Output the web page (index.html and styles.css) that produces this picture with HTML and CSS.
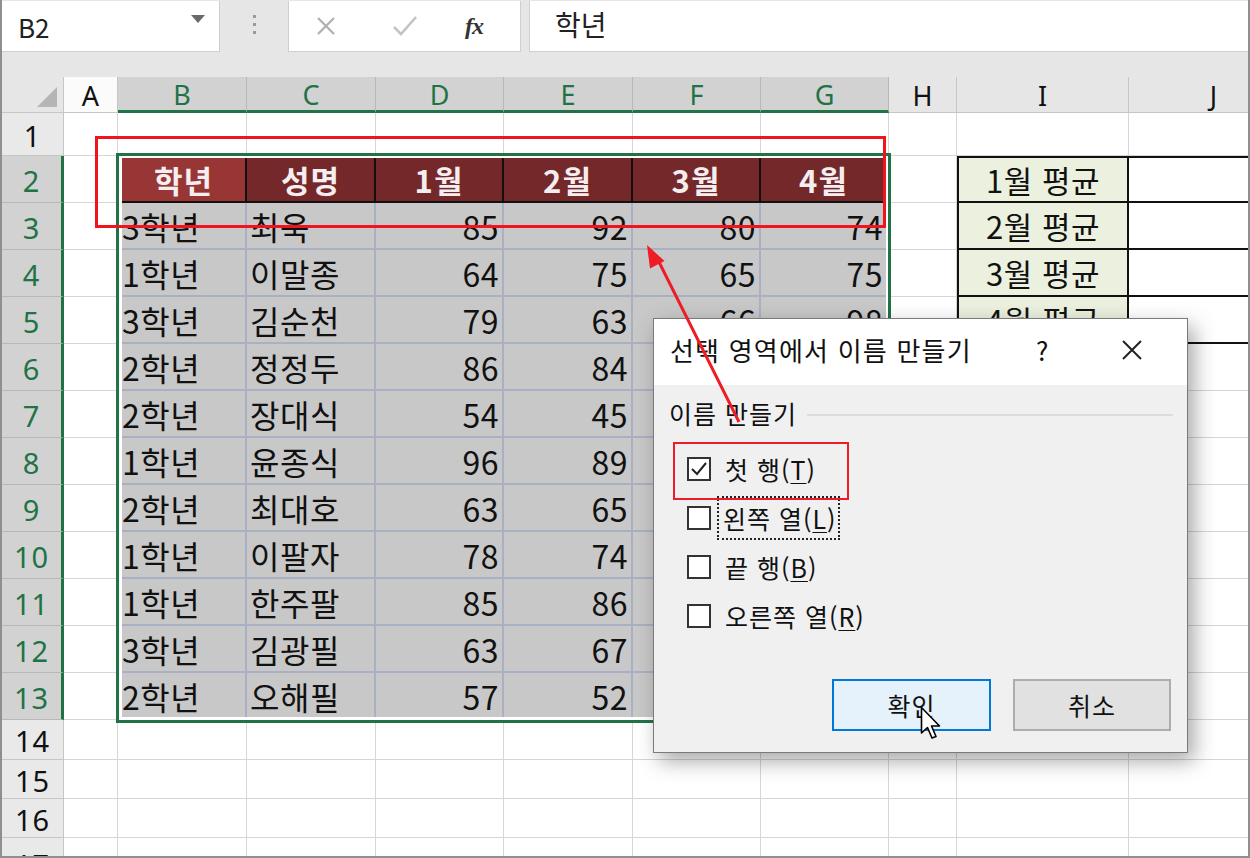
FILE: index.html
```html
<!DOCTYPE html>
<html lang="ko">
<head>
<meta charset="utf-8">
<title>선택 영역에서 이름 만들기</title>
<link rel="stylesheet" href="styles.css">
</head>
<body>
<div class="window">
  <div class="fbar">
    <div class="namebox"><span class="ref">B2</span><span class="dd"></span></div>
    <div class="dots"><i></i><i></i><i></i></div>
    <div class="fxbox">
      <svg class="ico-x" width="22" height="22" viewBox="0 0 22 22"><path d="M3 3L19 19M19 3L3 19" stroke="#b0b0b0" stroke-width="2.2" fill="none"/></svg>
      <svg class="ico-ok" width="28" height="24" viewBox="0 0 28 24"><path d="M3 13L10 20L25 3" stroke="#c4c4c4" stroke-width="2.6" fill="none"/></svg>
      <span class="fx">fx</span>
    </div>
    <div class="finput">학년</div>
  </div>
  <div class="band"></div>
  <div class="sheet">
    <div class="corner"><span class="tri"></span></div>
    <div class="ch a">A</div>
    <div class="ch sel">B</div><div class="ch sel">C</div><div class="ch sel">D</div><div class="ch sel">E</div><div class="ch sel">F</div><div class="ch sel">G</div>
    <div class="ch">H</div><div class="ch">I</div><div class="ch">J</div>

    <div class="rh">1</div><div class="c"></div><div class="c"></div><div class="c"></div><div class="c"></div><div class="c"></div><div class="c"></div><div class="c"></div><div class="c"></div><div class="c"></div><div class="c"></div>

    <div class="rh sel">2</div><div class="c"></div>
    <div class="th act">학년</div><div class="th">성명</div><div class="th">1월</div><div class="th">2월</div><div class="th">3월</div><div class="th last">4월</div>
    <div class="c"></div><div class="avg top">1월 평균</div><div class="avgv top"></div>

    <div class="rh sel">3</div><div class="c"></div>
    <div class="td first">3학년</div><div class="td">최욱</div><div class="td n">85</div><div class="td n">92</div><div class="td n">80</div><div class="td n last">74</div>
    <div class="c"></div><div class="avg">2월 평균</div><div class="avgv"></div>

    <div class="rh sel">4</div><div class="c"></div>
    <div class="td first">1학년</div><div class="td">이말종</div><div class="td n">64</div><div class="td n">75</div><div class="td n">65</div><div class="td n last">75</div>
    <div class="c"></div><div class="avg">3월 평균</div><div class="avgv"></div>

    <div class="rh sel">5</div><div class="c"></div>
    <div class="td first">3학년</div><div class="td">김순천</div><div class="td n">79</div><div class="td n">63</div><div class="td n">66</div><div class="td n last">98</div>
    <div class="c"></div><div class="avg">4월 평균</div><div class="avgv"></div>

    <div class="rh sel">6</div><div class="c"></div>
    <div class="td first">2학년</div><div class="td">정정두</div><div class="td n">86</div><div class="td n">84</div><div class="td n">71</div><div class="td n last">80</div>
    <div class="c"></div><div class="c"></div><div class="c"></div>

    <div class="rh sel">7</div><div class="c"></div>
    <div class="td first">2학년</div><div class="td">장대식</div><div class="td n">54</div><div class="td n">45</div><div class="td n">62</div><div class="td n last">58</div>
    <div class="c"></div><div class="c"></div><div class="c"></div>

    <div class="rh sel">8</div><div class="c"></div>
    <div class="td first">1학년</div><div class="td">윤종식</div><div class="td n">96</div><div class="td n">89</div><div class="td n">91</div><div class="td n last">94</div>
    <div class="c"></div><div class="c"></div><div class="c"></div>

    <div class="rh sel">9</div><div class="c"></div>
    <div class="td first">2학년</div><div class="td">최대호</div><div class="td n">63</div><div class="td n">65</div><div class="td n">70</div><div class="td n last">68</div>
    <div class="c"></div><div class="c"></div><div class="c"></div>

    <div class="rh sel">10</div><div class="c"></div>
    <div class="td first">1학년</div><div class="td">이팔자</div><div class="td n">78</div><div class="td n">74</div><div class="td n">77</div><div class="td n last">81</div>
    <div class="c"></div><div class="c"></div><div class="c"></div>

    <div class="rh sel">11</div><div class="c"></div>
    <div class="td first">1학년</div><div class="td">한주팔</div><div class="td n">85</div><div class="td n">86</div><div class="td n">83</div><div class="td n last">88</div>
    <div class="c"></div><div class="c"></div><div class="c"></div>

    <div class="rh sel">12</div><div class="c"></div>
    <div class="td first">3학년</div><div class="td">김광필</div><div class="td n">63</div><div class="td n">67</div><div class="td n">60</div><div class="td n last">64</div>
    <div class="c"></div><div class="c"></div><div class="c"></div>

    <div class="rh sel">13</div><div class="c"></div>
    <div class="td first bot">2학년</div><div class="td bot">오해필</div><div class="td n bot">57</div><div class="td n bot">52</div><div class="td n bot">59</div><div class="td n last bot">55</div>
    <div class="c"></div><div class="c"></div><div class="c"></div>

    <div class="rh">14</div><div class="c"></div><div class="c"></div><div class="c"></div><div class="c"></div><div class="c"></div><div class="c"></div><div class="c"></div><div class="c"></div><div class="c"></div><div class="c"></div>
    <div class="rh">15</div><div class="c"></div><div class="c"></div><div class="c"></div><div class="c"></div><div class="c"></div><div class="c"></div><div class="c"></div><div class="c"></div><div class="c"></div><div class="c"></div>
    <div class="rh">16</div><div class="c"></div><div class="c"></div><div class="c"></div><div class="c"></div><div class="c"></div><div class="c"></div><div class="c"></div><div class="c"></div><div class="c"></div><div class="c"></div>
    <div class="rh last">17</div><div class="c"></div><div class="c"></div><div class="c"></div><div class="c"></div><div class="c"></div><div class="c"></div><div class="c"></div><div class="c"></div><div class="c"></div><div class="c"></div>
  </div>

  <div class="selbox"></div>
  <div class="redbox"></div>

  <div class="dialog">
    <div class="dtitle">
      <span class="dtext">선택 영역에서 이름 만들기</span>
      <span class="help">?</span>
      <svg class="close" width="22" height="22" viewBox="0 0 22 22"><path d="M2 2L20 20M20 2L2 20" stroke="#222" stroke-width="2" fill="none"/></svg>
    </div>
    <div class="dbody">
      <div class="group"><span class="glabel">이름 만들기</span><span class="gline"></span></div>
      <div class="opts">
        <div class="opt hl">
          <span class="cb"><svg width="20" height="20" viewBox="0 0 20 20"><path d="M3 10L8 15L17 4" stroke="#222" stroke-width="2" fill="none"/></svg></span>
          <span class="lbl">첫 행(<u>T</u>)</span>
        </div>
        <div class="opt"><span class="cb"></span><span class="lbl focus">왼쪽 열(<u>L</u>)</span></div>
        <div class="opt"><span class="cb"></span><span class="lbl">끝 행(<u>B</u>)</span></div>
        <div class="opt"><span class="cb"></span><span class="lbl">오른쪽 열(<u>R</u>)</span></div>
      </div>
      <div class="btns">
        <div class="btn primary">확인</div>
        <div class="btn">취소</div>
      </div>
    </div>
  </div>

  <svg class="arrow" width="1250" height="858" viewBox="0 0 1250 858">
    <line x1="737" y1="422" x2="657" y2="262" stroke="#ee1c24" stroke-width="3"/>
    <polygon points="645,245 662.5,261 648,268.5" fill="#ee1c24"/>
  </svg>

  <svg class="cursor" width="24" height="36" viewBox="0 0 24 36">
    <path d="M1.5 1.5L1.5 27L7.5 21.5L12 32L16 30.5L11.5 20L19.5 20Z" fill="#fff" stroke="#000" stroke-width="1.6" stroke-linejoin="round"/>
  </svg>
</div>
</body>
</html>
```
FILE: styles.css
```css
* { box-sizing: border-box; }
html, body { margin: 0; padding: 0; }
body {
  width: 1250px;
  height: 858px;
  overflow: hidden;
  background: #fff;
  font-family: "Noto Sans CJK KR", "Noto Sans", sans-serif;
  color: #111;
}
.window {
  position: relative;
  width: 1250px;
  height: 858px;
  overflow: hidden;
  border: 2px solid #8f8f8f;
  border-top: none;
  background: #e6e6e6;
}

/* formula bar */
.fbar {
  display: flex;
  height: 53px;
  background: #e6e6e6;
}
.namebox {
  width: 218px;
  height: 51px;
  margin-top: 1px;
  background: #fff;
  border-right: 1px solid #cfcfcf;
  border-bottom: 1px solid #cfcfcf;
  display: flex;
  align-items: center;
  justify-content: space-between;
  padding: 0 14px 0 16px;
}
.ref { font-size: 26px; color: #222; }
.dd {
  width: 0; height: 0;
  border-left: 7px solid transparent;
  border-right: 7px solid transparent;
  border-top: 8px solid #6a6a6a;
  margin-top: -14px;
}
.dots {
  width: 68px;
  display: flex;
  flex-direction: column;
  align-items: center;
  justify-content: center;
  gap: 5px;
  padding-bottom: 4px;
}
.dots i { display: block; width: 3px; height: 3px; background: #9a9a9a; }
.fxbox {
  width: 233px;
  height: 51px;
  margin-top: 1px;
  background: #fff;
  border: 1px solid #cfcfcf;
  border-top: none;
  display: flex;
  align-items: center;
  padding-left: 26px;
}
.ico-x { margin-right: 54px; }
.ico-ok { margin-right: 46px; }
.fx {
  font-family: "Liberation Serif", serif;
  font-style: italic;
  font-size: 24px;
  color: #333;
  font-weight: bold;
  letter-spacing: -1px;
}
.finput {
  flex: 1;
  height: 51px;
  margin-top: 1px;
  margin-left: 8px;
  background: #fff;
  border-left: 1px solid #cfcfcf;
  border-bottom: 1px solid #cfcfcf;
  font-size: 28px;
  padding-left: 25px;
  line-height: 46px;
  color: #222;
}
.band { height: 24px; background: #e6e6e6; }

/* sheet */
.sheet {
  display: grid;
  grid-template-columns: 62px 54px 129px 129px 128px 129px 128px 128px 68px 172px 170px;
  grid-template-rows: 36px 43px repeat(12, 47px) 40px 39px 39px 39px;
  background: #fff;
}
.sheet > div {
  display: flex;
  align-items: center;
  overflow: hidden;
  white-space: nowrap;
}
.corner {
  background: #e6e6e6;
  border-right: 1px solid #c6c6c6;
  border-bottom: 1px solid #c6c6c6;
  position: relative;
}
.tri {
  position: absolute;
  right: 6px; bottom: 5px;
  width: 0; height: 0;
  border-left: 20px solid transparent;
  border-bottom: 20px solid #b5b5b5;
}
.ch {
  justify-content: center;
  background: #e6e6e6;
  border-right: 1px solid #c6c6c6;
  border-bottom: 1px solid #c6c6c6;
  font-family: "Noto Sans", sans-serif;
  font-size: 27px;
  line-height: 30px;
  color: #111;
  padding-top: 2px;
}
.ch.a { background: #fbfbfb; }
.ch.sel {
  background: #d2d2d2;
  color: #217346;
  border-bottom: 3px solid #217346;
  border-right: 1px solid #b8b8b8;
}
.rh {
  justify-content: center;
  background: #e9e9e9;
  border-right: 1px solid #c6c6c6;
  border-bottom: 1px solid #c6c6c6;
  font-family: "Noto Sans", sans-serif;
  font-size: 29px;
  line-height: 34px;
  color: #111;
  padding-top: 3px;
  letter-spacing: 1px;
}
.sheet > .rh.last { align-items: flex-start; padding-top: 10px; }
.rh.sel {
  background: #d2d2d2;
  color: #217346;
  border-right: 3px solid #217346;
  border-bottom: 1px solid #b8b8b8;
}
.c {
  border-right: 1px solid #d6d6d6;
  border-bottom: 1px solid #d6d6d6;
}
.th {
  justify-content: center;
  background: #74282a;
  color: #f4eef0;
  font-weight: bold;
  font-size: 31px;
  letter-spacing: 1px;
  border-right: 2px solid #111;
  border-bottom: 2px solid #111;
  margin-top: 2px;
}
.th.act { background: #983636; margin-left: 4px; }
.th.last { margin-right: 3px; border-right: none; }
.td {
  background: #c8c8c8;
  border-right: 2px solid #a9b0c4;
  border-bottom: 2px solid #a9b0c4;
  font-size: 32px;
  letter-spacing: 0.5px;
  color: #111;
  padding-left: 3px;
  padding-top: 1px;
}
.td.first { margin-left: 4px; padding-left: 0; }
.td.n { justify-content: flex-end; padding-right: 3px; padding-left: 0; }
.td.last { margin-right: 3px; border-right: none; }
.td.bot { margin-bottom: 3px; border-bottom: none; }
.avg {
  justify-content: center;
  background: #ebf1de;
  border: 2px solid #111;
  border-top: none;
  font-size: 31px;
  letter-spacing: 0.5px;
  color: #111;
}
.avgv {
  background: #fff;
  border-right: 2px solid #111;
  border-bottom: 2px solid #111;
}
.sheet > .top { border-top: 2px solid #111; }

/* overlays */
.selbox {
  position: absolute;
  left: 114px;
  top: 153px;
  width: 775px;
  height: 570px;
  border: 3px solid #217346;
  pointer-events: none;
}
.redbox {
  position: absolute;
  left: 93px;
  top: 136px;
  width: 791px;
  height: 92px;
  border: 3px solid #f0141e;
  pointer-events: none;
}

/* dialog */
.dialog {
  position: absolute;
  left: 651px;
  top: 318px;
  width: 535px;
  height: 435px;
  background: #f0f0f0;
  border: 1px solid #7a7a7a;
  box-shadow: 6px 8px 20px rgba(0,0,0,0.35);
  display: flex;
  flex-direction: column;
}
.dtitle {
  height: 66px;
  background: #fff;
  display: flex;
  align-items: center;
  padding-left: 16px;
  padding-bottom: 6px;
  flex-shrink: 0;
}
.dtext { font-size: 26px; letter-spacing: 1.2px; color: #111; width: 366px; }
.help { font-size: 26px; color: #111; width: 85px; }
.close { margin-top: 2px; }
.dbody {
  flex: 1;
  display: flex;
  flex-direction: column;
  padding: 12px 14px 0 15px;
}
.group {
  display: flex;
  align-items: center;
  height: 32px;
}
.glabel { font-size: 25px; letter-spacing: 1px; color: #111; }
.gline { flex: 1; height: 2px; background: #dcdcdc; margin-left: 10px; margin-top: 4px; }
.opts {
  display: flex;
  flex-direction: column;
  margin-top: 16px;
  padding-left: 18px;
}
.opt {
  display: flex;
  align-items: center;
  height: 50px;
  margin-top: -1px;
}
.opt.hl { position: relative; }
.opt.hl::after {
  content: "";
  position: absolute;
  left: -14px;
  top: -2px;
  width: 172px;
  height: 54px;
  border: 2px solid #ec1c2a;
}
.cb {
  width: 24px;
  height: 24px;
  border: 2px solid #333;
  background: #fff;
  display: flex;
  align-items: center;
  justify-content: center;
  margin-right: 12px;
}
.lbl { font-size: 25px; letter-spacing: 1px; color: #111; padding: 0 2px; }
.lbl u { text-decoration-thickness: 1px; text-underline-offset: 3px; }
.lbl.focus { outline: 2px dotted #222; outline-offset: 2px; padding: 0 0 0 2px; margin-left: -2px; }
.btns {
  display: flex;
  justify-content: flex-end;
  gap: 22px;
  margin-top: 38px;
  padding-right: 2px;
}
.btn {
  width: 158px;
  height: 52px;
  display: flex;
  align-items: center;
  justify-content: center;
  font-size: 25px;
  letter-spacing: 1px;
  color: #111;
  background: #e1e1e1;
  border: 2px solid #adadad;
}
.btn.primary {
  background: #e5f1fb;
  border: 2px solid #0078d7;
  width: 159px;
}

.arrow { position: absolute; left: 0; top: 0; pointer-events: none; }
.cursor { position: absolute; left: 918px; top: 706px; }
```
